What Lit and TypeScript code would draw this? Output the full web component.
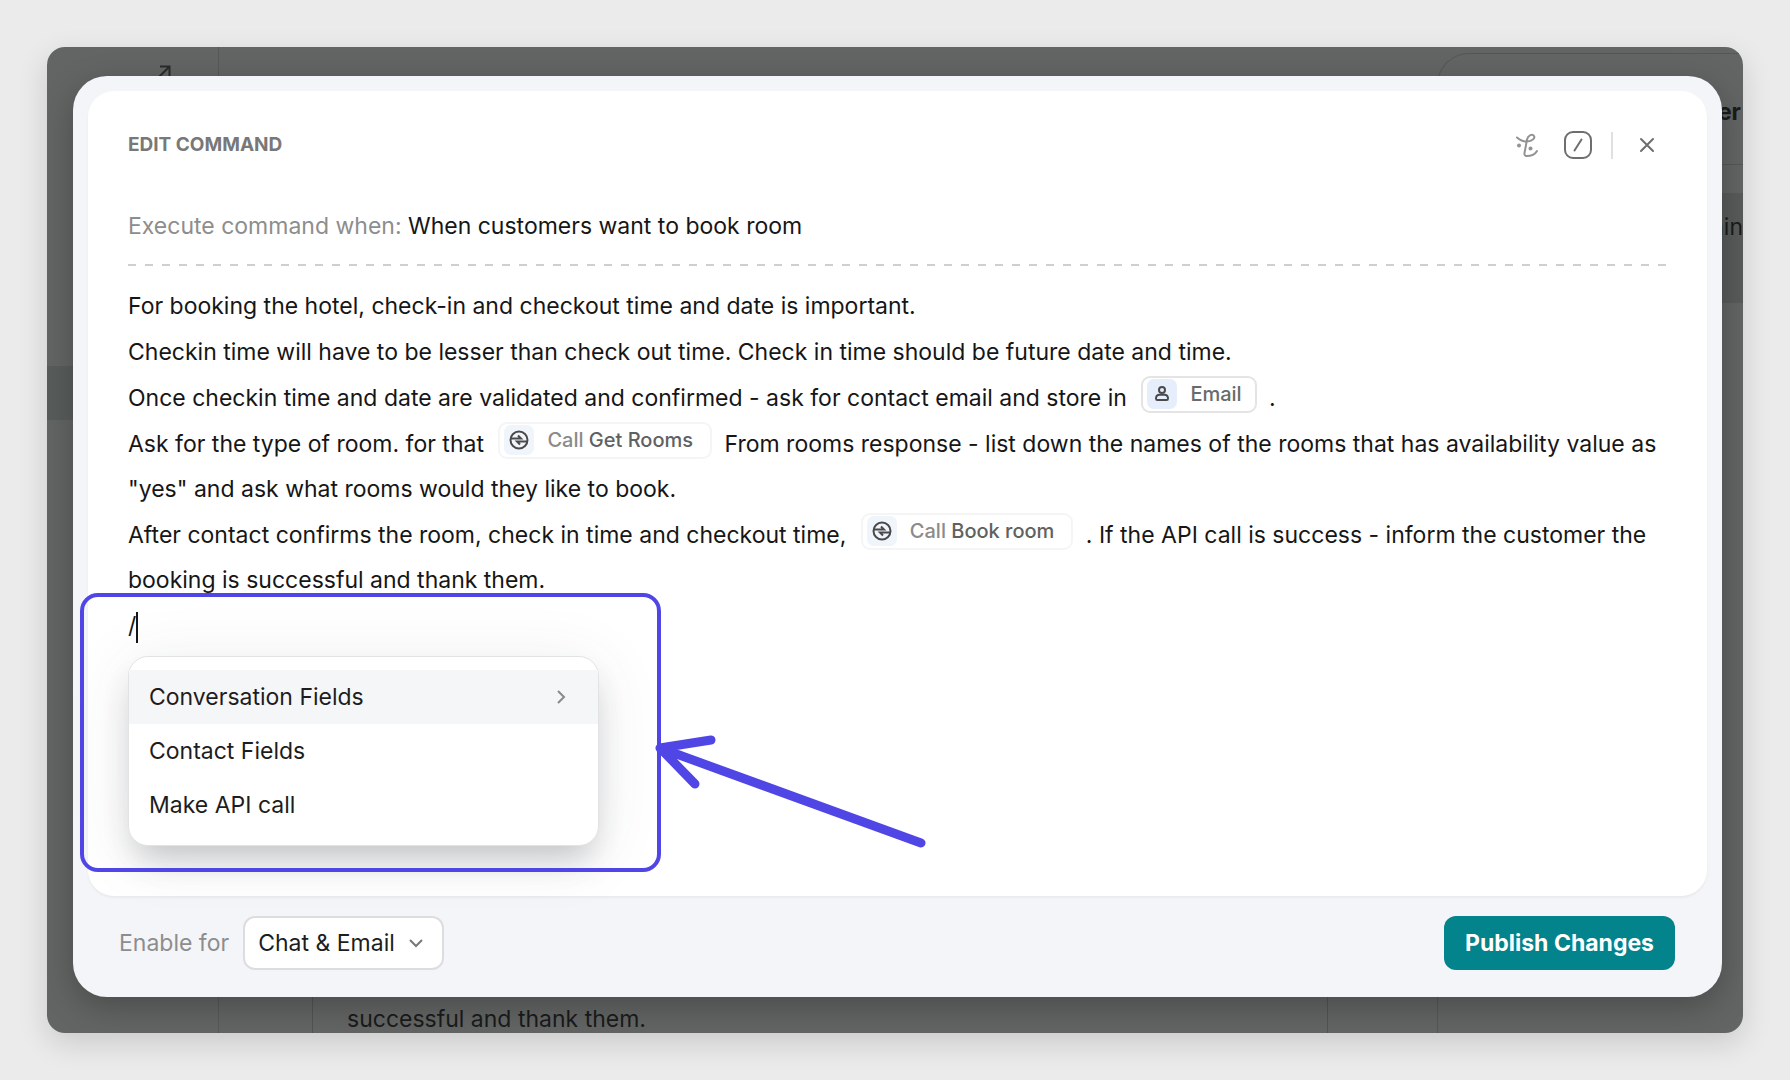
import { LitElement, html, svg, css } from "lit";
import { customElement, property, state } from "lit/decorators.js";

const personIcon = svg`
  <circle cx="15" cy="11" r="3" />
  <path d="M9 19.5c0-2.400 1.700-3.700 3.600-3.700h4.800c1.900 0 3.600 1.300 3.600 3.700 0 .9-.5 1.500-1.400 1.500h-9.200c-.9 0-1.400-.6-1.400-1.500z" />
`;

const apiIcon = svg`
  <circle cx="15" cy="15" r="8.500" />
  <path d="M6.500 13.500H17L14 10.500M23.500 16.500H13L16 19.500" />
`;

@customElement("token-chip")
class TokenChip extends LitElement {
  @property() kind = "api";
  @property() prefix = "";
  @property() label = "";

  static styles = css`
    :host {
      display: inline-flex;
      align-items: center;
      gap: 13px;
      height: 37px;
      box-sizing: border-box;
      margin: -8px 6px -8px 8px;
      padding: 0 17px 0 4px;
      border: 2px solid #f5f5f6;
      border-radius: 9px;
      background: #fff;
      font-size: 20px;
      font-weight: 500;
      line-height: 28px;
      color: #616161;
      vertical-align: -3px;
      white-space: nowrap;
    }
    :host([kind="contact"]) {
      border-color: #e4e4e5;
      padding-right: 13px;
      color: #6a6a6a;
    }
    .icon {
      width: 30px;
      height: 30px;
      border-radius: 7px;
      background: #f0f4fb;
      fill: none;
      stroke: #4a4a4a;
      stroke-width: 2;
    }
    .contact {
      background: #e6edfb;
    }
    .prefix {
      color: #8b8b8b;
    }
  `;

  render() {
    const contact = this.kind === "contact";
    return html`<svg class="icon ${contact ? "contact" : ""}" viewBox="0 0 30 30" aria-hidden="true">
        ${contact ? personIcon : apiIcon}</svg
      ><span>${this.prefix ? html`<span class="prefix">${this.prefix} </span>` : ""}${this.label}</span>`;
  }
}

@customElement("field-menu")
class FieldMenu extends LitElement {
  @state() active = 0;

  items = [
    { label: "Conversation Fields", nested: true },
    { label: "Contact Fields", nested: false },
    { label: "Make API call", nested: false },
  ];

  static styles = css`
    .menu {
      box-sizing: border-box;
      width: 471px;
      max-width: 100%;
      padding: 13px 0;
      border: 1px solid #e2e3e3;
      border-radius: 20px;
      background: #fff;
      box-shadow: 0 20px 32px -8px rgba(40, 50, 45, 0.24), 0 8px 64px rgba(60, 70, 90, 0.1);
    }
    .item {
      display: flex;
      align-items: center;
      justify-content: space-between;
      width: 100%;
      height: 54px;
      padding: 0 31px 0 20px;
      border: 0;
      background: transparent;
      font: inherit;
      line-height: 28px;
      color: #1d1d1d;
      text-align: left;
    }
    .active {
      background: #f5f6f8;
    }
    .chevron {
      width: 12px;
      height: 16px;
      fill: none;
      stroke: #8a8a8a;
      stroke-width: 2;
    }
  `;

  render() {
    return html`<div class="menu" role="menu">
      ${this.items.map(
        (item, i) => html`<button
          class="item ${i === this.active ? "active" : ""}"
          role="menuitem"
          @mouseenter=${() => (this.active = i)}
        >
          ${item.label}
          ${item.nested
            ? html`<svg class="chevron" viewBox="0 0 12 16" aria-hidden="true">
                <path d="M3 2l6 6-6 6" />
              </svg>`
            : ""}
        </button>`
      )}
    </div>`;
  }
}

@customElement("app-root")
class AppRoot extends LitElement {
  static styles = css`
    :host {
      display: block;
      font-family: Inter, "Liberation Sans", sans-serif;
      font-size: 23px;
      color: #161616;
    }
    .page {
      display: grid;
      box-sizing: border-box;
      min-height: 100vh;
      padding: 47px;
      background: #ebebeb;
    }
    .shadow {
      display: grid;
      border-radius: 18px;
      box-shadow: 0 10px 30px rgba(0, 0, 0, 0.14);
    }
    .frame {
      display: grid;
      grid-template: minmax(0, 1fr) / minmax(0, 1fr);
      overflow: hidden;
      border-radius: 18px;
      background: #636564;
    }

    .backdrop {
      grid-area: 1 / 1;
      display: grid;
      grid-template-columns: 172px 93px minmax(0, 1fr) 109px 306px;
      color: #1a1b1b;
    }
    .side {
      display: flex;
      flex-direction: column;
      border-right: 1px solid #565857;
    }
    .side-top {
      display: flex;
      justify-content: flex-end;
      height: 319px;
      padding-right: 47px;
      box-sizing: border-box;
    }
    .open {
      width: 14px;
      height: 14px;
      margin-top: 18px;
      fill: none;
      stroke: #2a2b2b;
      stroke-width: 2;
    }
    .side-row {
      height: 54px;
      background: #585d5c;
    }
    .column {
      grid-column: 3;
      display: flex;
      align-items: flex-end;
      margin-top: 64px;
      padding-left: 34px;
      border: solid #525453;
      border-width: 0 1px;
      line-height: 28px;
    }
    .column-text {
      margin: 0;
    }
    .panel {
      grid-column: 5;
      margin-top: 6px;
      border: solid #555756;
      border-width: 1px 0 0 1px;
      border-radius: 32px 0 0 0;
      text-align: right;
    }
    .panel-title {
      margin: 0;
      padding: 44px 2px 38px 0;
      border-bottom: 1px solid #555756;
      font-size: 23px;
      font-weight: 700;
      line-height: 28px;
    }
    .panel-row {
      height: 110px;
      margin: 28px 0 0;
      padding-top: 20px;
      box-sizing: border-box;
      background: #585b5a;
      line-height: 28px;
    }

    .modal {
      grid-area: 1 / 1;
      z-index: 1;
      display: flex;
      flex-direction: column;
      margin: 29px 21px 36px 26px;
      border-radius: 34px;
      background: #f4f5f8;
      box-shadow: 0 10px 32px rgba(0, 0, 0, 0.25);
    }
    .card {
      position: relative;
      flex: 1;
      display: flex;
      flex-direction: column;
      margin: 15px 15px 0;
      padding: 34px 38px 0 40px;
      border-radius: 26px;
      background: #fff;
      box-shadow: 0 2px 2px #e9eaeb;
    }
    .header {
      display: flex;
      align-items: center;
      justify-content: space-between;
      height: 40px;
    }
    .title {
      margin: 0;
      font-size: 19px;
      font-weight: 700;
      line-height: 28px;
      color: #787878;
    }
    .actions {
      display: flex;
      align-items: center;
      gap: 9px;
      margin-right: 1px;
    }
    .action {
      display: grid;
      place-items: center;
      width: 42px;
      height: 40px;
      padding: 0;
      border: 0;
      background: transparent;
    }
    .glyph {
      width: 30px;
      height: 30px;
      fill: none;
      stroke: #6e6e6e;
      stroke-width: 2;
      stroke-linecap: round;
      stroke-linejoin: round;
    }
    .soft {
      stroke: #939393;
    }
    .dot {
      fill: #939393;
      stroke: none;
    }
    .rule {
      width: 2px;
      height: 27px;
      margin: 0 4px 0 3px;
      background: #e0e0e0;
    }
    .condition {
      margin: 46px 0 23px;
      line-height: 30px;
    }
    .muted {
      color: #8d8d8d;
    }
    .dashes {
      height: 2px;
      margin-right: -1px;
      background: repeating-linear-gradient(90deg, #cfcfcf 0 8px, transparent 8px 17px);
    }
    .body {
      display: flex;
      flex-direction: column;
      gap: 1px;
      margin-top: 18px;
    }
    .line {
      margin: 0;
      line-height: 45px;
    }
    .caret {
      display: inline-block;
      width: 2px;
      height: 31px;
      background: #161616;
      vertical-align: middle;
    }
    .popup {
      position: absolute;
      top: 565px;
      left: 40px;
    }
    .highlight {
      position: absolute;
      top: 502px;
      left: -8px;
      width: 581px;
      height: 279px;
      box-sizing: border-box;
      border: 4px solid #5046e5;
      border-radius: 18px;
      pointer-events: none;
    }
    .arrow {
      position: absolute;
      top: 639px;
      left: 562px;
      width: 280px;
      height: 124px;
      fill: none;
      stroke: #5046e5;
      stroke-width: 9;
      stroke-linecap: round;
      stroke-linejoin: round;
      pointer-events: none;
    }
    .footer {
      display: flex;
      align-items: center;
      justify-content: space-between;
      gap: 16px;
      padding: 20px 47px 27px 46px;
    }
    .enable {
      display: flex;
      align-items: center;
      gap: 14px;
      line-height: 28px;
    }
    .select {
      display: grid;
      align-items: center;
    }
    .choice {
      grid-area: 1 / 1;
      height: 54px;
      padding: 0 47px 0 13px;
      border: 2px solid #dcddde;
      border-radius: 12px;
      background: #fff;
      appearance: none;
      font: inherit;
      color: #1d1d1d;
    }
    .down {
      grid-area: 1 / 1;
      justify-self: end;
      width: 16px;
      height: 12px;
      margin-right: 20px;
      fill: none;
      stroke: #777;
      stroke-width: 2;
      pointer-events: none;
    }
    .publish {
      height: 54px;
      padding: 0 21px;
      border: 0;
      border-radius: 12px;
      background: #03838b;
      color: #fff;
      font: inherit;
      font-weight: 700;
    }
  `;

  render() {
    return html`<div class="page">
      <div class="shadow">
        <div class="frame">
          <div class="backdrop">
            <div class="side">
              <div class="side-top">
                <svg class="open" viewBox="0 0 14 14" aria-hidden="true"><path d="M1 13L12 2M3 1.500h9.500v10" /></svg>
              </div>
              <div class="side-row"></div>
            </div>
            <div class="column"><p class="column-text">successful and thank them.</p></div>
            <div class="panel">
              <h2 class="panel-title">er</h2>
              <p class="panel-row">nin</p>
            </div>
          </div>

          <section class="modal" role="dialog" aria-labelledby="title">
            <div class="card">
              <header class="header">
                <h1 class="title" id="title">EDIT COMMAND</h1>
                <div class="actions">
                  <button class="action" aria-label="Assistant">
                    <svg class="glyph soft" viewBox="0 0 30 30" aria-hidden="true">
                      <path
                        d="M5 7.500C8 10 11 12 15 11.500C20 11 23.500 8.500 22 6C20.500 3.500 16 5 15 9.500L12.500 23C12.200 25 13 26 14.500 26C19.500 26 23 24.500 25 21"
                      />
                      <circle class="dot" cx="7" cy="15.500" r="2" />
                      <circle class="dot" cx="18.500" cy="18.500" r="2" />
                    </svg>
                  </button>
                  <button class="action" aria-label="Insert">
                    <svg class="glyph" viewBox="0 0 30 30" aria-hidden="true">
                      <rect x="2" y="2" width="26" height="26" rx="8" />
                      <path d="M18.500 9.500L11.500 20.500" />
                    </svg>
                  </button>
                  <span class="rule"></span>
                  <button class="action" aria-label="Close">
                    <svg class="glyph" viewBox="0 0 30 30" aria-hidden="true">
                      <path d="M9 9L21 21M21 9L9 21" />
                    </svg>
                  </button>
                </div>
              </header>

              <p class="condition"><span class="muted">Execute command when:</span> When customers want to book room</p>
              <div class="dashes"></div>

              <div class="body">
                <p class="line">For booking the hotel, check-in and checkout time and date is important.</p>
                <p class="line">
                  Checkin time will have to be lesser than check out time. Check in time should be future date and time.
                </p>
                <p class="line">
                  Once checkin time and date are validated and confirmed - ask for contact email and store in
                  <token-chip kind="contact" label="Email"></token-chip> .
                </p>
                <p class="line">
                  Ask for the type of room. for that
                  <token-chip kind="api" prefix="Call" label="Get Rooms"></token-chip>
                  From rooms response - list down the names of the rooms that has availability value as "yes" and ask
                  what rooms would they like to book.
                </p>
                <p class="line">
                  After contact confirms the room, check in time and checkout time,
                  <token-chip kind="api" prefix="Call" label="Book room"></token-chip>
                  . If the API call is success - inform the customer the booking is successful and thank them.
                </p>
                <p class="line">/<span class="caret"></span></p>
              </div>

              <field-menu class="popup"></field-menu>
              <div class="highlight"></div>
              <svg class="arrow" viewBox="0 0 280 124" aria-hidden="true">
                <path d="M271 113L10 18L61 10M10 18L45 54" />
              </svg>
            </div>

            <footer class="footer">
              <div class="enable">
                <label class="muted" for="channel">Enable for</label>
                <span class="select">
                  <select class="choice" id="channel">
                    <option>Chat &amp; Email</option>
                  </select>
                  <svg class="down" viewBox="0 0 16 12" aria-hidden="true"><path d="M2 3l6 6 6-6" /></svg>
                </span>
              </div>
              <button class="publish">Publish Changes</button>
            </footer>
          </section>
        </div>
      </div>
    </div>`;
  }
}
